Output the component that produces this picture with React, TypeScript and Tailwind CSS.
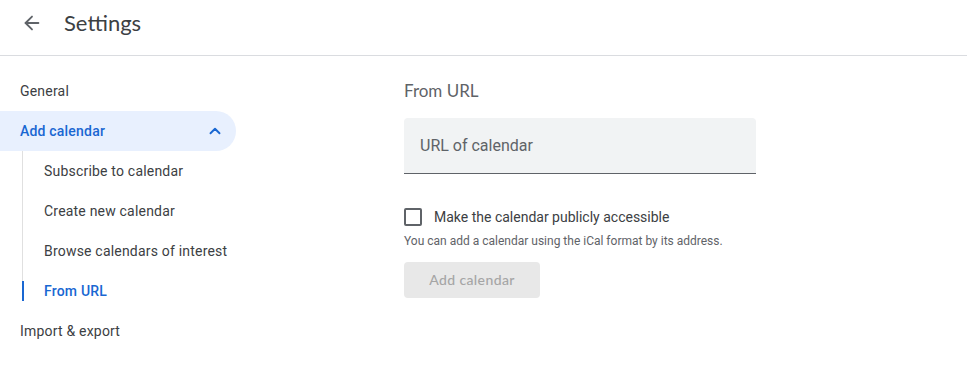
import { ArrowLeft, ChevronUp } from "lucide-react";

const subItems = ["Subscribe to calendar", "Create new calendar", "Browse calendars of interest", "From URL"];

export default function App() {
    return (
        <div className="w-[967px] h-[382px] bg-white overflow-hidden font-['Roboto',sans-serif] text-[#3c4043]">
            {/* Header */}
            <header className="h-14 border-b border-[#dadce0] flex items-start pt-[9px] pl-[20px]">
                <button aria-label="Back" className="w-6 h-7 flex items-center justify-center text-[#5f6368]">
                    <ArrowLeft size={22} strokeWidth={2} />
                </button>
                <h1 className="ml-5 text-[22px] font-['Lato',sans-serif] text-[#3c4043] leading-7">Settings</h1>
            </header>

            <div className="flex">
                {/* Sidebar */}
                <nav className="w-[404px] shrink-0 pt-[15px] text-sm tracking-[0.2px]">
                    <div className="h-10 flex items-center pl-5">General</div>
                    <div className="h-10 w-[236px] flex items-center justify-between pl-5 pr-[12px] bg-[#e8f0fe] rounded-r-full text-[#1967d2] font-medium">
                        <span>Add calendar</span>
                        <ChevronUp size={18} strokeWidth={2.5} />
                    </div>
                    <div className="ml-[22px]">
                        {subItems.map((item, i) => {
                            const active = i === subItems.length - 1;
                            return (
                                <div key={item} className="relative h-10 flex items-center pl-[22px]">
                                    {active ? (
                                        <>
                                            <span className="absolute left-0 top-0 h-[10px] w-px bg-[#e0e0e0]" />
                                            <span className="absolute left-0 top-[10px] h-5 w-[2px] bg-[#1967d2]" />
                                        </>
                                    ) : (
                                        <span className="absolute left-0 top-0 bottom-0 w-px bg-[#e0e0e0]" />
                                    )}
                                    <span className={active ? "text-[#1967d2] font-medium" : ""}>{item}</span>
                                </div>
                            );
                        })}
                    </div>
                    <div className="h-10 flex items-center pl-5">Import &amp; export</div>
                </nav>

                {/* Main */}
                <main className="pt-[24px] w-[352px]">
                    <h2 className="text-[17px] leading-[22px] font-['Lato',sans-serif] text-[#5f6368]">From URL</h2>
                    <div className="mt-[16px] h-[56px] bg-[#f1f3f4] rounded-t border-b border-[#5f6368] flex items-center px-4">
                        <span className="text-base text-[#5f6368]">URL of calendar</span>
                    </div>

                    <label className="mt-[33px] flex items-center">
                        <span className="w-[18px] h-[18px] border-2 border-[#5f6368] rounded-[2px]" />
                        <span className="ml-3 text-sm text-[#3c4043]">Make the calendar publicly accessible</span>
                    </label>
                    <p className="mt-[6px] text-xs text-[#5f6368] whitespace-nowrap">
                        You can add a calendar using the iCal format by its address.
                    </p>
                    <button className="mt-[13px] h-9 w-[136px] rounded bg-[#e8e8e8] text-sm font-medium text-[#a5a5a5] font-['Lato',sans-serif] tracking-[0.4px]">
                        Add calendar
                    </button>
                </main>
            </div>
        </div>
    );
}
